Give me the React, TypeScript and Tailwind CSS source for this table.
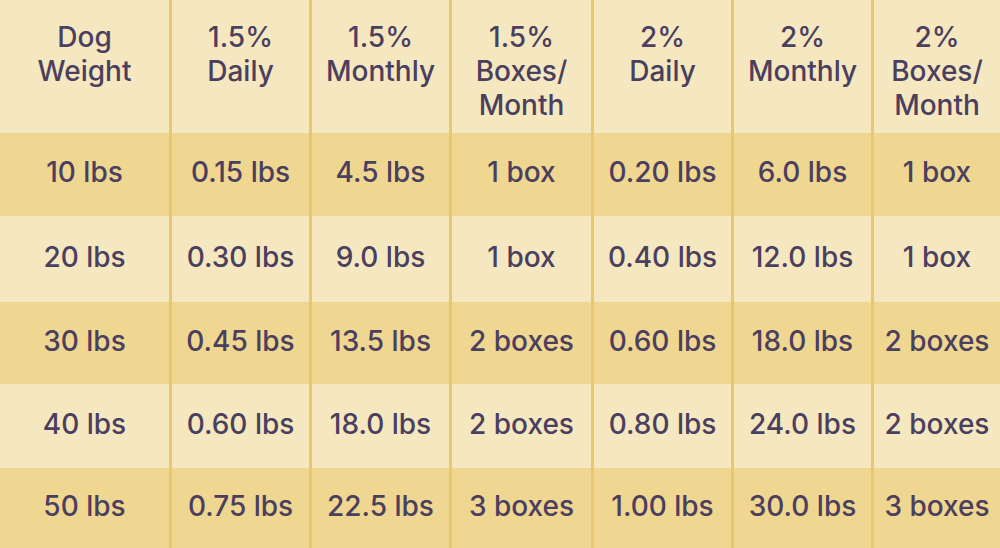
import React from "react";

const headers: string[][] = [
  ["Dog", "Weight"],
  ["1.5%", "Daily"],
  ["1.5%", "Monthly"],
  ["1.5%", "Boxes/", "Month"],
  ["2%", "Daily"],
  ["2%", "Monthly"],
  ["2%", "Boxes/", "Month"],
];

const rows: { h: string; cells: string[] }[] = [
  { h: "h-[83px]", cells: ["10 lbs", "0.15 lbs", "4.5 lbs", "1 box", "0.20 lbs", "6.0 lbs", "1 box"] },
  { h: "h-[86px]", cells: ["20 lbs", "0.30 lbs", "9.0 lbs", "1 box", "0.40 lbs", "12.0 lbs", "1 box"] },
  { h: "h-[82px]", cells: ["30 lbs", "0.45 lbs", "13.5 lbs", "2 boxes", "0.60 lbs", "18.0 lbs", "2 boxes"] },
  { h: "h-[84px]", cells: ["40 lbs", "0.60 lbs", "18.0 lbs", "2 boxes", "0.80 lbs", "24.0 lbs", "2 boxes"] },
  { h: "h-[80px]", cells: ["50 lbs", "0.75 lbs", "22.5 lbs", "3 boxes", "1.00 lbs", "30.0 lbs", "3 boxes"] },
];

export default function App() {
  return (
    <div
      className="w-[1000px] h-[548px] overflow-hidden bg-[#e9c76e] grid grid-cols-[169px_137px_137px_139px_137px_137px_126px] gap-x-[3px] text-[#4b3f5e]"
      style={{ fontFamily: "Inter, 'Noto Sans', sans-serif" }}
    >
      {headers.map((lines, i) => (
        <div
          key={"h" + i}
          className="h-[133px] bg-[#f5e7c0] pt-[20px] flex flex-col items-center text-[28px] leading-[34px] font-medium"
        >
          {lines.map((l, j) => (
            <span key={j}>{l}</span>
          ))}
        </div>
      ))}
      {rows.map((r, ri) =>
        r.cells.map((c, ci) => (
          <div
            key={ri + "-" + ci}
            className={`${r.h} ${ri % 2 === 0 ? "bg-[#efd691]" : "bg-[#f5e7c0]"} pb-[5px] flex items-center justify-center text-[28px] font-medium whitespace-nowrap`}
          >
            {c}
          </div>
        ))
      )}
    </div>
  );
}
